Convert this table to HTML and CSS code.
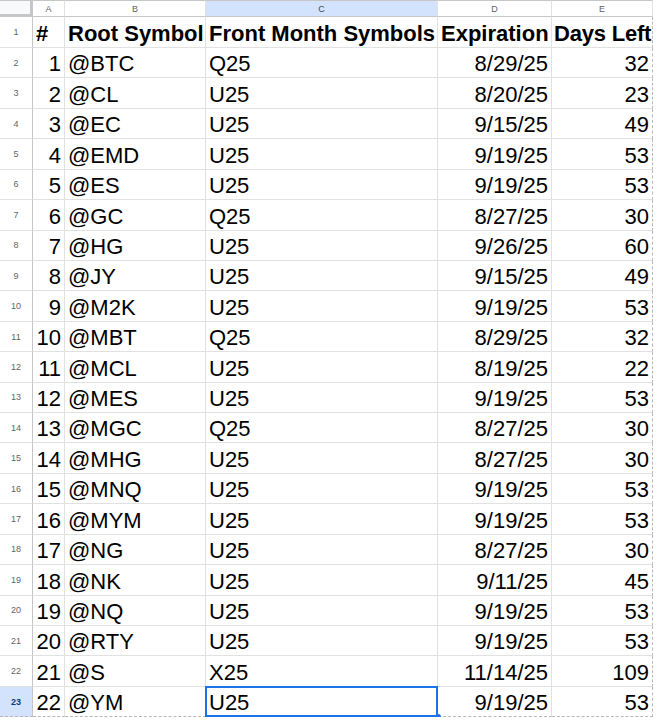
FILE: index.html
```html
<!DOCTYPE html>
<html>
<head>
<meta charset="utf-8">
<link rel="stylesheet" href="styles.css">
</head>
<body>
<div class="sheet">
  <div class="corner"></div>
  <div class="ch">A</div>
  <div class="ch">B</div>
  <div class="ch sel-col">C</div>
  <div class="ch">D</div>
  <div class="ch last">E</div>

  <div class="rh">1</div>
  <div class="c b">#</div>
  <div class="c b">Root Symbol</div>
  <div class="c b">Front Month Symbols</div>
  <div class="c b">Expiration</div>
  <div class="c b last tight">Days Left</div>

  <div class="rh">2</div><div class="c r">1</div><div class="c">@BTC</div><div class="c">Q25</div><div class="c r">8/29/25</div><div class="c r last">32</div>
  <div class="rh">3</div><div class="c r">2</div><div class="c">@CL</div><div class="c">U25</div><div class="c r">8/20/25</div><div class="c r last">23</div>
  <div class="rh">4</div><div class="c r">3</div><div class="c">@EC</div><div class="c">U25</div><div class="c r">9/15/25</div><div class="c r last">49</div>
  <div class="rh">5</div><div class="c r">4</div><div class="c">@EMD</div><div class="c">U25</div><div class="c r">9/19/25</div><div class="c r last">53</div>
  <div class="rh">6</div><div class="c r">5</div><div class="c">@ES</div><div class="c">U25</div><div class="c r">9/19/25</div><div class="c r last">53</div>
  <div class="rh">7</div><div class="c r">6</div><div class="c">@GC</div><div class="c">Q25</div><div class="c r">8/27/25</div><div class="c r last">30</div>
  <div class="rh">8</div><div class="c r">7</div><div class="c">@HG</div><div class="c">U25</div><div class="c r">9/26/25</div><div class="c r last">60</div>
  <div class="rh">9</div><div class="c r">8</div><div class="c">@JY</div><div class="c">U25</div><div class="c r">9/15/25</div><div class="c r last">49</div>
  <div class="rh">10</div><div class="c r">9</div><div class="c">@M2K</div><div class="c">U25</div><div class="c r">9/19/25</div><div class="c r last">53</div>
  <div class="rh">11</div><div class="c r">10</div><div class="c">@MBT</div><div class="c">Q25</div><div class="c r">8/29/25</div><div class="c r last">32</div>
  <div class="rh">12</div><div class="c r">11</div><div class="c">@MCL</div><div class="c">U25</div><div class="c r">8/19/25</div><div class="c r last">22</div>
  <div class="rh">13</div><div class="c r">12</div><div class="c">@MES</div><div class="c">U25</div><div class="c r">9/19/25</div><div class="c r last">53</div>
  <div class="rh">14</div><div class="c r">13</div><div class="c">@MGC</div><div class="c">Q25</div><div class="c r">8/27/25</div><div class="c r last">30</div>
  <div class="rh">15</div><div class="c r">14</div><div class="c">@MHG</div><div class="c">U25</div><div class="c r">8/27/25</div><div class="c r last">30</div>
  <div class="rh">16</div><div class="c r">15</div><div class="c">@MNQ</div><div class="c">U25</div><div class="c r">9/19/25</div><div class="c r last">53</div>
  <div class="rh">17</div><div class="c r">16</div><div class="c">@MYM</div><div class="c">U25</div><div class="c r">9/19/25</div><div class="c r last">53</div>
  <div class="rh">18</div><div class="c r">17</div><div class="c">@NG</div><div class="c">U25</div><div class="c r">8/27/25</div><div class="c r last">30</div>
  <div class="rh">19</div><div class="c r">18</div><div class="c">@NK</div><div class="c">U25</div><div class="c r">9/11/25</div><div class="c r last">45</div>
  <div class="rh">20</div><div class="c r">19</div><div class="c">@NQ</div><div class="c">U25</div><div class="c r">9/19/25</div><div class="c r last">53</div>
  <div class="rh">21</div><div class="c r">20</div><div class="c">@RTY</div><div class="c">U25</div><div class="c r">9/19/25</div><div class="c r last">53</div>
  <div class="rh">22</div><div class="c r">21</div><div class="c">@S</div><div class="c">X25</div><div class="c r">11/14/25</div><div class="c r last">109</div>
  <div class="rh sel-row bot">23</div><div class="c r bot">22</div><div class="c bot">@YM</div><div class="c bot selected">U25</div><div class="c r bot">9/19/25</div><div class="c r last bot">53</div>
</div>
</body>
</html>
```
FILE: styles.css
```css
html, body {
  margin: 0;
  padding: 0;
  background: #ffffff;
}

.sheet {
  display: grid;
  grid-template-columns: 33px 32px 141px 232px 114px 101px;
  grid-template-rows: 17px 31px repeat(22, 30.43px);
  width: 653px;
  font-family: "Liberation Sans", Arial, sans-serif;
  color: #000000;
}

.sheet > div {
  box-sizing: border-box;
  border-right: 1px solid #e1e1e1;
  border-bottom: 1px solid #e1e1e1;
  min-width: 0;
}

.corner {
  background: #f8f9fa;
  border-top: 1px solid #c4c7c5;
  border-right: 3px solid #c4c7c5 !important;
  border-bottom: 3px solid #c4c7c5 !important;
}

.ch {
  border-top: 1px solid #c4c7c5;
  border-bottom: 1px solid #c4c7c5 !important;
  font-size: 9px;
  color: #5f6368;
  display: flex;
  align-items: center;
  justify-content: center;
  padding-top: 1px;
}

.ch.sel-col {
  background: #d3e3fd;
  color: #444746;
}

.rh {
  font-size: 9px;
  color: #5f6368;
  display: flex;
  align-items: center;
  justify-content: center;
  border-right: 1px solid #c4c7c5 !important;
}

.rh.sel-row {
  background: #d3e3fd;
  color: #0b3a82;
  font-weight: bold;
}

.c {
  font-size: 22px;
  line-height: 22px;
  display: flex;
  align-items: flex-end;
  padding: 0 3px 2px 3px;
  white-space: nowrap;
  overflow: hidden;
}

.c.b {
  font-weight: bold;
  overflow: visible;
}

.c.tight {
  letter-spacing: -0.2px;
  padding-left: 2px;
}

.c.r {
  justify-content: flex-end;
}

.last {
  border-right: 1px dashed #b8b8b8 !important;
}

.ch.last {
  border-right: 1px solid #e1e1e1 !important;
}

.bot {
  border-bottom: 1px dashed #b8b8b8 !important;
}

.selected {
  position: relative;
  overflow: visible;
}

.selected::after {
  content: "";
  position: absolute;
  left: -1px;
  top: -1px;
  right: -1px;
  bottom: -1px;
  border: 2px solid #1a73e8;
  box-sizing: border-box;
  pointer-events: none;
}

.selected::before {
  content: "";
  position: absolute;
  right: -4px;
  bottom: -4px;
  width: 6px;
  height: 6px;
  border-radius: 50%;
  background: #1a73e8;
  z-index: 2;
}
```
